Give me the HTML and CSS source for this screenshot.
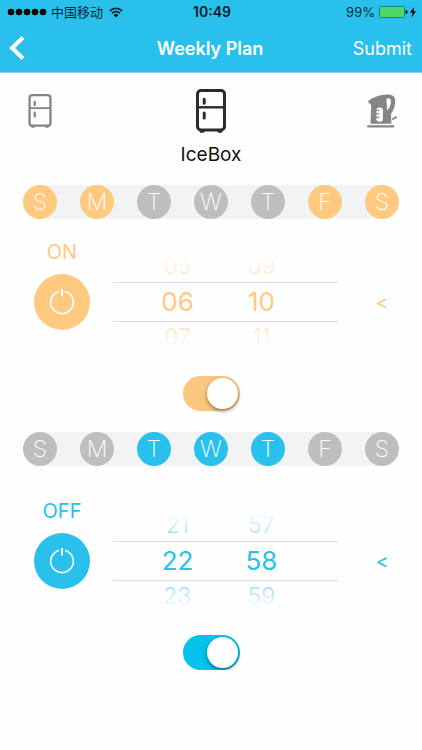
FILE: index.html
```html
<!DOCTYPE html>
<html lang="en">

<head>
  <meta charset="UTF-8">
  <meta name="viewport" content="width=device-width, initial-scale=1.0">
  <title>Weekly Plan</title>
  <link rel="stylesheet" href="styles.css">
</head>

<body>

  <svg class="defs" aria-hidden="true">
    <symbol id="fridge" viewBox="0 0 30 44">
      <rect x="1.5" y="1.5" width="27" height="39.5" rx="3.5" fill="none" stroke="currentColor" stroke-width="3" />
      <path d="M1.5 18.3h27" stroke="currentColor" stroke-width="2.4" />
      <path d="M8.2 10.2v4M8.2 24v5" stroke="currentColor" stroke-width="3" stroke-linecap="round" />
      <path d="M3.5 41h5v1.5a1.3 1.3 0 0 1-1.3 1.3H5a1.5 1.5 0 0 1-1.5-1.5zM21.5 41h5v1.3a1.5 1.5 0 0 1-1.5 1.5h-2.2a1.3 1.3 0 0 1-1.3-1.3z" fill="currentColor" />
    </symbol>
    <symbol id="power" viewBox="0 0 28 28">
      <path d="M11 3.400a11.300 11.300 0 1 0 6 0" fill="none" stroke="currentColor" stroke-width="1.6" />
      <path d="M14 1v7.500" stroke="currentColor" stroke-width="2" />
    </symbol>
  </svg>

  <header class="header">
    <div class="status">
      <div class="carrier">
        <svg width="40" height="8" viewBox="0 0 40 8" aria-hidden="true">
          <circle cx="4" cy="4" r="3.3" />
          <circle cx="12" cy="4" r="3.3" />
          <circle cx="20" cy="4" r="3.3" />
          <circle cx="28" cy="4" r="3.3" />
          <circle cx="36" cy="4" r="3.3" />
        </svg>
        <span lang="zh">中国移动</span>
        <svg width="14" height="11" viewBox="0 0 14 11" aria-hidden="true">
          <path d="M0.800 4a8.800 8.800 0 0 1 12.400 0M3 6.400a5.600 5.600 0 0 1 8 0" fill="none" stroke="#062a35" stroke-width="1.8" />
          <path d="M4.700 8.100a3.200 3.200 0 0 1 4.600 0L7 10.500z" />
        </svg>
      </div>
      <div class="clock">10:49</div>
      <div class="battery">
        <span>99%</span>
        <svg width="38" height="12" viewBox="0 0 38 12" aria-hidden="true">
          <rect x="0.5" y="0.5" width="25" height="11" rx="1" fill="#4fd964" stroke="#167f96" />
          <path d="M26.6 4a2 2 0 0 1 0 4z" />
          <path d="M35.2 0.8L31 6.600h2.600l-1.200 4.800 4.600-6.200h-2.700z" />
        </svg>
      </div>
    </div>
    <nav class="nav">
      <button class="nav-button back" aria-label="Back">
        <svg width="17" height="24" viewBox="0 0 17 24" aria-hidden="true">
          <path d="M15 1.500L4 12l11 10.500" fill="none" stroke="#fff" stroke-width="4" />
        </svg>
      </button>
      <h1 class="title">Weekly Plan</h1>
      <button class="nav-button submit">Submit</button>
    </nav>
  </header>

  <main>
    <div class="devices">
      <button class="device" aria-label="Fridge">
        <svg width="24" height="34" aria-hidden="true"><use href="#fridge" /></svg>
      </button>
      <button class="device current">
        <svg width="30" height="44" aria-hidden="true"><use href="#fridge" /></svg>
        <span>IceBox</span>
      </button>
      <button class="device" aria-label="Kettle">
        <svg width="30" height="34" viewBox="0 0 30 34" aria-hidden="true">
          <path fill-rule="evenodd" fill="currentColor" d="M0.800 7.500C5 3.500 12 0.600 20 0.400c6 0 8.500 2.200 8.200 7-.2 5-1.700 9-4.200 12.300l.5 10H3.500L4.200 11.300zM21 4.200c-1.300 0-1.700.8-1.600 2l.8 10.200c2.300-2.300 3.600-5.600 3.800-9.200.1-2-1-3-3-3zM12 13.400c-1.800 0-2.600 1-2.600 2.300h3v1.200h-3v2.300h3v1.200h-3v2.300h3v1.200h-3v1.300c0 1.500 1 2.500 2.600 2.500h1.300c1.700 0 2.600-1 2.600-2.500v-9.300c0-1.500-1-2.500-2.600-2.500z" />
          <path d="M1.200 32.400h25" stroke="currentColor" stroke-width="2.200" stroke-linecap="round" />
          <path d="M26 25l3-1.800" stroke="currentColor" stroke-width="2" stroke-linecap="round" />
        </svg>
      </button>
    </div>

    <section class="plan plan-on">
      <div class="days">
        <button class="day" aria-pressed="true">S</button>
        <button class="day" aria-pressed="true">M</button>
        <button class="day" aria-pressed="false">T</button>
        <button class="day" aria-pressed="false">W</button>
        <button class="day" aria-pressed="false">T</button>
        <button class="day" aria-pressed="true">F</button>
        <button class="day" aria-pressed="true">S</button>
      </div>
      <div class="time">
        <div class="action">
          <span id="on-label">ON</span>
          <button class="power" aria-labelledby="on-label">
            <svg width="28" height="28" aria-hidden="true"><use href="#power" /></svg>
          </button>
        </div>
        <div class="picker">
          <div class="row above"><span>05</span><span>09</span></div>
          <div class="row selected"><span>06</span><span>10</span></div>
          <div class="row below"><span>07</span><span>11</span></div>
        </div>
        <button class="more">&lt;</button>
      </div>
      <input class="switch" type="checkbox" aria-label="Enable on time" checked>
    </section>

    <section class="plan plan-off">
      <div class="days">
        <button class="day" aria-pressed="false">S</button>
        <button class="day" aria-pressed="false">M</button>
        <button class="day" aria-pressed="true">T</button>
        <button class="day" aria-pressed="true">W</button>
        <button class="day" aria-pressed="true">T</button>
        <button class="day" aria-pressed="false">F</button>
        <button class="day" aria-pressed="false">S</button>
      </div>
      <div class="time">
        <div class="action">
          <span id="off-label">OFF</span>
          <button class="power" aria-labelledby="off-label">
            <svg width="28" height="28" aria-hidden="true"><use href="#power" /></svg>
          </button>
        </div>
        <div class="picker">
          <div class="row above"><span>21</span><span>57</span></div>
          <div class="row selected"><span>22</span><span>58</span></div>
          <div class="row below"><span>23</span><span>59</span></div>
        </div>
        <button class="more">&lt;</button>
      </div>
      <input class="switch" type="checkbox" aria-label="Enable off time" checked>
    </section>
  </main>

  <script>
    document.querySelectorAll('.day').forEach(day => {
      day.addEventListener('click', () => {
        day.setAttribute('aria-pressed', day.getAttribute('aria-pressed') !== 'true')
      })
    })
  </script>

</body>

</html>
```

FILE: styles.css
```css
* {
  box-sizing: border-box;
}

body {
  margin: 0;
  background-color: #fefefe;
  color: #111;
  font-family: Inter, 'Noto Sans CJK SC', sans-serif;
}

button {
  padding: 0;
  border: 0;
  background: none;
  color: inherit;
  font: inherit;
  cursor: pointer;
}

svg {
  display: block;
}

.defs {
  position: absolute;
  width: 0;
  height: 0;
}

/* header */
.header {
  background-color: #29c1eb;
  border-bottom: 1px solid #94d3e6;
}

.status {
  display: grid;
  grid-template-columns: 1fr auto 1fr;
  align-items: center;
  height: 24px;
  padding: 0 5px 0 7px;
  color: #062a35;
  font-size: 13px;
  line-height: 20px;
}

.carrier,
.battery {
  display: flex;
  align-items: center;
  gap: 4px;
}

.carrier span {
  margin-right: 2px;
}

.battery {
  justify-content: flex-end;
}

.clock {
  color: #05202a;
  font-size: 14px;
  font-weight: 600;
}

.nav {
  display: grid;
  grid-template-columns: 1fr auto 1fr;
  align-items: center;
  height: 48px;
  padding: 0 10px 0 8px;
  color: #fff;
  font-size: 18px;
}

.title {
  margin: 0;
  font-size: 18px;
  font-weight: 600;
}

.back {
  justify-self: start;
}

.submit {
  justify-self: end;
}

/* devices */
.devices {
  display: flex;
  justify-content: space-between;
  align-items: flex-start;
  padding: 16px 24px 18px;
}

.device {
  display: flex;
  flex-direction: column;
  align-items: center;
  justify-content: center;
  gap: 10px;
  width: 32px;
  height: 44px;
  color: #858585;
}

.device.current {
  width: auto;
  height: auto;
  color: #2b2b2d;
}

.device span {
  color: #111;
  font-size: 19px;
  line-height: 24px;
}

/* plans */
.plan {
  --accent: #29c1eb;
  --switch: #05c3ea;
  display: flex;
  flex-direction: column;
  padding: 0 23px;
}

.plan-on {
  --accent: #ffca80;
  --switch: #fbc67d;
  margin-bottom: 21px;
}

.days {
  display: flex;
  justify-content: space-between;
  margin-bottom: 21px;
  border-radius: 17px;
  background-color: #f1f3f5;
}

.plan-off .days {
  margin-bottom: 33px;
}

.day {
  width: 34px;
  height: 34px;
  border-radius: 50%;
  background-color: #bdbec0;
  color: #fff;
  font-size: 23px;
  font-weight: 200;
  line-height: 34px;
}

.day[aria-pressed="true"] {
  background-color: var(--accent);
}

.time {
  display: grid;
  grid-template-columns: 78px 1fr 49px;
  column-gap: 12px;
  align-items: center;
  height: 124px;
  color: var(--accent);
}

.action {
  display: flex;
  flex-direction: column;
  align-items: center;
  align-self: start;
  gap: 10px;
  font-size: 20px;
  line-height: 24px;
}

.power {
  display: flex;
  align-items: center;
  justify-content: center;
  width: 56px;
  height: 56px;
  border-radius: 50%;
  background-color: var(--accent);
  color: #fff;
}

.row {
  display: flex;
  justify-content: center;
  padding-right: 12px;
  font-size: 23px;
  font-weight: 300;
  line-height: 31px;
}

.row span {
  width: 84px;
  text-align: center;
}

.row.selected {
  border: solid #dcdcdc;
  border-width: 1px 0;
  font-size: 26px;
  font-weight: 400;
  line-height: 38px;
}

/* the wheel fades out away from the selected row */
.above {
  mask-image: linear-gradient(to top, rgba(0, 0, 0, 0.6), transparent 90%);
}

.below {
  mask-image: linear-gradient(to bottom, rgba(0, 0, 0, 0.6), transparent 90%);
}

.more {
  justify-self: end;
  width: 34px;
  height: 34px;
  font-size: 20px;
}

.switch {
  appearance: none;
  align-self: center;
  width: 57px;
  height: 35px;
  margin: 12px 0 0;
  padding: 2px;
  border-radius: 18px;
  background-color: #d8d8d8;
  cursor: pointer;
}

.switch::before {
  content: '';
  display: block;
  width: 31px;
  height: 31px;
  border-radius: 50%;
  background-color: #fff;
  box-shadow: 0 2px 4px rgba(0, 0, 0, 0.4);
}

.switch:checked {
  background-color: var(--switch);
}

.switch:checked::before {
  margin-left: auto;
}
```
